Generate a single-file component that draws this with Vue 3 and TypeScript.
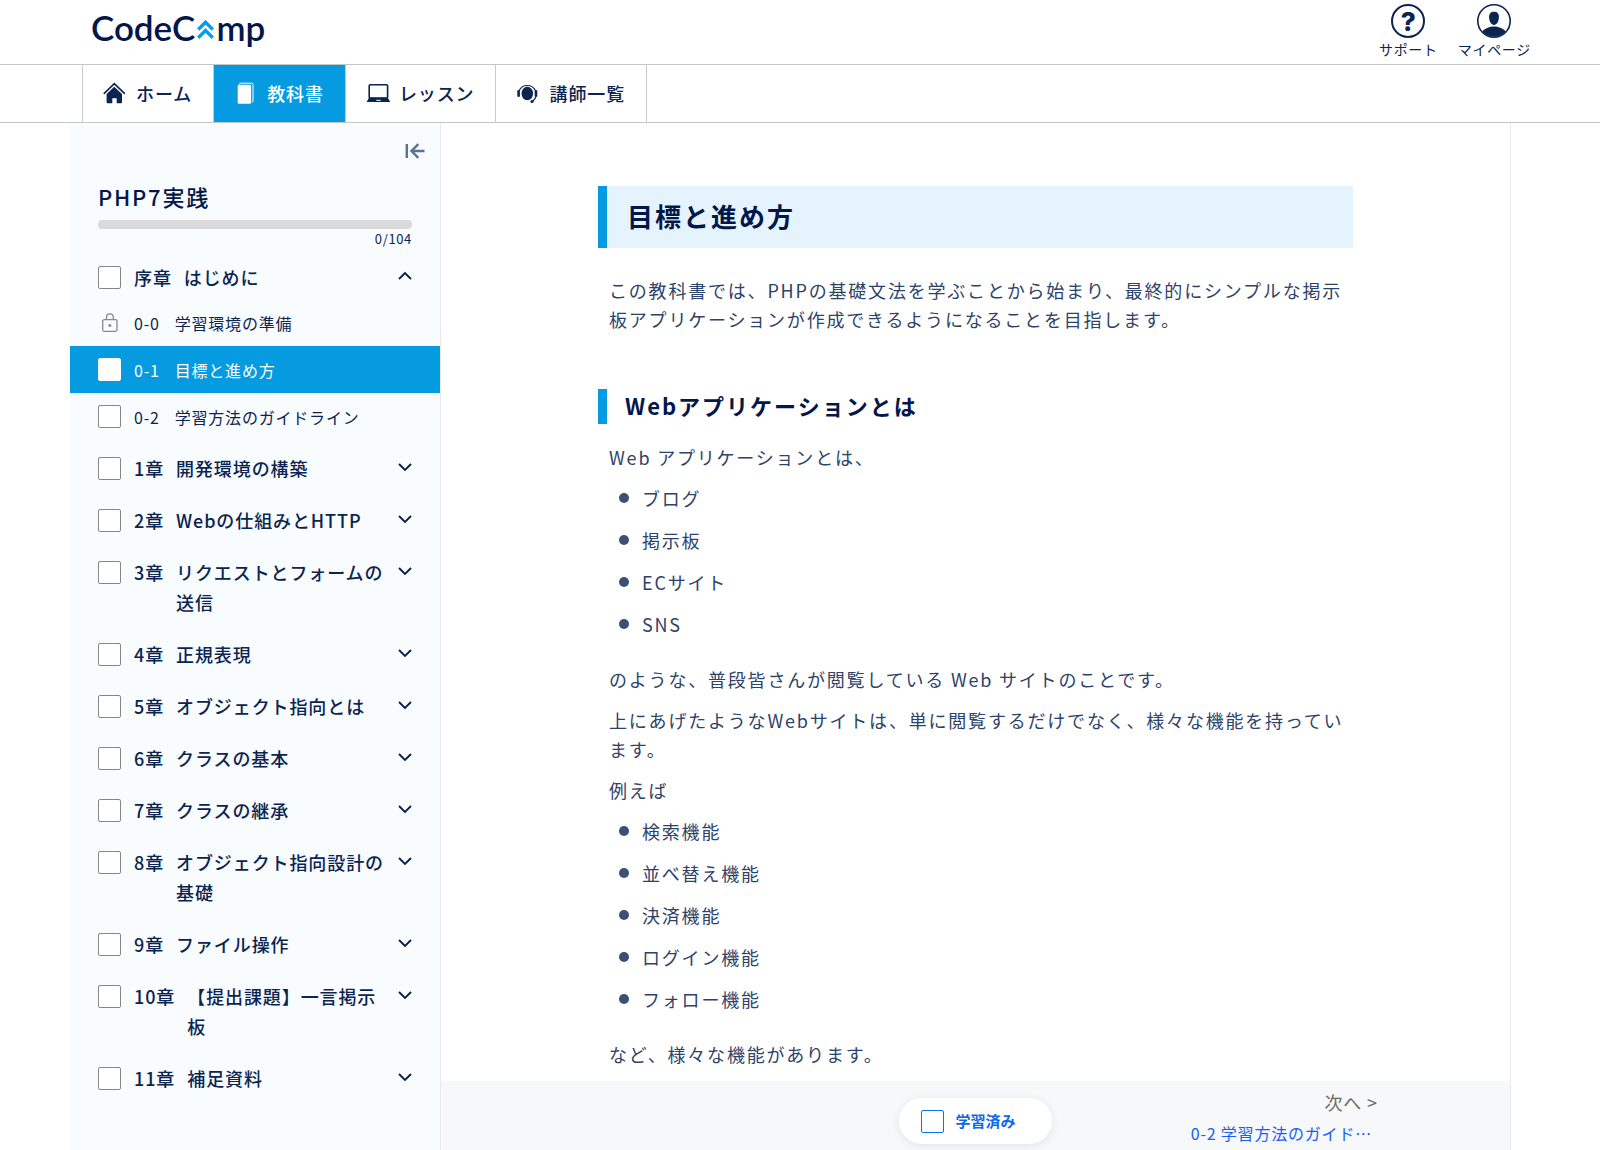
<script setup lang="ts">
import { ref } from 'vue'

interface Section {
  no: string
  title: string
  locked?: boolean
  current?: boolean
}

interface Chapter {
  no: string
  title: string
  sections?: Section[]
}

const chapters: Chapter[] = [
  {
    no: '序章',
    title: 'はじめに',
    sections: [
      { no: '0-0', title: '学習環境の準備', locked: true },
      { no: '0-1', title: '目標と進め方', current: true },
      { no: '0-2', title: '学習方法のガイドライン' },
    ],
  },
  { no: '1章', title: '開発環境の構築' },
  { no: '2章', title: 'Webの仕組みとHTTP' },
  { no: '3章', title: 'リクエストとフォームの送信' },
  { no: '4章', title: '正規表現' },
  { no: '5章', title: 'オブジェクト指向とは' },
  { no: '6章', title: 'クラスの基本' },
  { no: '7章', title: 'クラスの継承' },
  { no: '8章', title: 'オブジェクト指向設計の基礎' },
  { no: '9章', title: 'ファイル操作' },
  { no: '10章', title: '【提出課題】一言掲示板' },
  { no: '11章', title: '補足資料' },
]

const siteKinds: string[] = ['ブログ', '掲示板', 'ECサイト', 'SNS']
const features: string[] = ['検索機能', '並べ替え機能', '決済機能', 'ログイン機能', 'フォロー機能']

const openChapter = ref<string>('序章')
const done = ref<boolean>(false)

function toggle(no: string): void {
  openChapter.value = openChapter.value === no ? '' : no
}
</script>

<template>
  <div class="page">
    <header class="top">
      <a class="logo" href="#" aria-label="CodeCamp">
        <span>CodeC</span>
        <svg class="logo-mark" viewBox="0 0 17 20" width="17" height="20" aria-hidden="true">
          <path d="M1.200 10.500 8.500 3.200l7.300 7.300M1.200 18.800l7.300-7.300 7.300 7.300" fill="none" stroke="#00a0f5" stroke-width="3.400" />
        </svg>
        <span>mp</span>
      </a>
      <nav class="account">
        <a class="account-link" href="#">
          <span class="round">?</span>
          <span>サポート</span>
        </a>
        <a class="account-link" href="#">
          <svg viewBox="0 0 34 34" width="34" height="34" aria-hidden="true">
            <circle cx="17" cy="17" r="16.2" fill="#fff" stroke="#0c2450" stroke-width="1.6" />
            <path d="M17 7.800c3.400 0 4.900 2 4.900 5.200 0 4.200-2 8-4.900 8s-4.900-3.800-4.900-8c0-3.200 1.500-5.200 4.900-5.200z" fill="#0c2450" />
            <path d="M5.300 27.600C8 24.200 13 22.600 17 22.600s9 1.600 11.700 5A15.800 15.800 0 0 1 5.300 27.600z" fill="#0c2450" />
          </svg>
          <span>マイページ</span>
        </a>
      </nav>
    </header>

    <nav class="tabs">
      <a class="tab" href="#">
        <svg viewBox="0 0 24 24" width="24" height="24" aria-hidden="true">
          <path d="M1.200 12.300 11.300 2.600l10.100 9.700" fill="none" stroke="#0c2450" stroke-width="1.600" stroke-linecap="round" />
          <path d="M11.300 5.700 19 13v8.200a1 1 0 0 1-1 1h-4.300v-5h-4.400v5H4.600a1 1 0 0 1-1-1V13z" fill="#0c2450" />
        </svg>
        <span>ホーム</span>
      </a>
      <a class="tab active" href="#">
        <svg viewBox="0 0 24 24" width="24" height="24" aria-hidden="true">
          <path d="M5 3.400A1.700 1.700 0 0 1 6.500 2.200H17.800a1.200 1.200 0 0 1 1.200 1.200V20a1.200 1.200 0 0 1-1.200 1.200" fill="none" stroke="#fff" stroke-width="1" />
          <rect x="3.700" y="3.700" width="13.400" height="19" rx="1.200" fill="#fff" />
        </svg>
        <span>教科書</span>
      </a>
      <a class="tab" href="#">
        <svg viewBox="0 0 24 24" width="24" height="24" aria-hidden="true">
          <rect x="3.200" y="3.800" width="18.400" height="13.200" rx="1" fill="#fff" stroke="#0c2450" stroke-width="1.600" />
          <path d="M3 16.800h18.800l2 3.400a.5.500 0 0 1-.4.900H1.400a.5.500 0 0 1-.4-.9z" fill="#0c2450" />
          <path d="M10.300 19.300h4.400" stroke="#fff" stroke-width="1" />
        </svg>
        <span>レッスン</span>
      </a>
      <a class="tab" href="#">
        <svg viewBox="0 0 24 24" width="24" height="24" aria-hidden="true">
          <path d="M3 10a9 9 0 0 1 16.600 0" fill="none" stroke="#0c2450" stroke-width="1.200" />
          <ellipse cx="11.300" cy="12.500" rx="5.800" ry="6.700" fill="#0c2450" />
          <rect x="1.300" y="9" width="2.600" height="7" rx="1.300" fill="#0c2450" />
          <rect x="18.700" y="9" width="2.600" height="7" rx="1.300" fill="#0c2450" />
          <path d="M19.800 15.500c-.4 2.400-1.600 4-3.800 4.800" fill="none" stroke="#0c2450" stroke-width="1.200" />
          <circle cx="16" cy="20.500" r="1.600" fill="#0c2450" />
        </svg>
        <span>講師一覧</span>
      </a>
    </nav>

    <div class="body">
      <aside class="sidebar">
        <div class="collapse-row">
          <button class="icon-button" type="button" aria-label="目次を閉じる">
            <svg viewBox="0 0 20 16" width="20" height="16" aria-hidden="true">
              <path d="M1.800 1v14M19.500 8H7M13.300 1.200 6.500 8l6.800 6.800" fill="none" stroke="#5f6f8f" stroke-width="2.400" />
            </svg>
          </button>
        </div>
        <h2 class="course">PHP7実践</h2>
        <div class="bar"></div>
        <p class="count">0/104</p>

        <ul class="chapters">
          <li v-for="c in chapters" :key="c.no">
            <div class="chapter" :class="{ open: openChapter === c.no }">
              <input :id="'c-' + c.no" class="check" type="checkbox" />
              <label class="chapter-label" :for="'c-' + c.no">
                <span class="chapter-no">{{ c.no }}</span>
                <span>{{ c.title }}</span>
              </label>
              <button class="icon-button chevron" type="button" :aria-label="c.no + 'を開閉'" @click="toggle(c.no)">
                <svg viewBox="0 0 14 10" width="14" height="10" aria-hidden="true">
                  <path :d="openChapter === c.no ? 'M1 8l6-6 6 6' : 'M1 2l6 6 6-6'" fill="none" stroke="#0a1c48" stroke-width="1.800" />
                </svg>
              </button>
            </div>
            <ul v-if="c.sections && openChapter === c.no" class="sections">
              <li v-for="s in c.sections" :key="s.no" class="section" :class="{ current: s.current }">
                <span v-if="s.locked" class="lock">
                  <svg viewBox="0 0 16 19" width="16" height="19" aria-hidden="true">
                    <rect x=".7" y="6.700" width="14.300" height="11.600" rx="1.500" fill="none" stroke="#8a8a8a" stroke-width="1.300" />
                    <path d="M4.500 6.700V4.300a3.400 3.400 0 0 1 6.800 0v2.400" fill="none" stroke="#8a8a8a" stroke-width="1.300" />
                    <circle cx="7.900" cy="12.500" r="1.500" fill="#8a8a8a" />
                  </svg>
                </span>
                <input v-else class="check" type="checkbox" :aria-label="s.title" />
                <a class="section-link" href="#">
                  <span>{{ s.no }}</span>
                  <span>{{ s.title }}</span>
                </a>
              </li>
            </ul>
          </li>
        </ul>
      </aside>

      <main class="main">
        <article class="article">
          <h1>目標と進め方</h1>
          <p>この教科書では、PHPの基礎文法を学ぶことから始まり、最終的にシンプルな掲示板アプリケーションが作成できるようになることを目指します。</p>
          <h2>Webアプリケーションとは</h2>
          <p>Web アプリケーションとは、</p>
          <ul>
            <li v-for="k in siteKinds" :key="k">{{ k }}</li>
          </ul>
          <p>のような、普段皆さんが閲覧している Web サイトのことです。</p>
          <p>上にあげたようなWebサイトは、単に閲覧するだけでなく、様々な機能を持っています。</p>
          <p>例えば</p>
          <ul>
            <li v-for="f in features" :key="f">{{ f }}</li>
          </ul>
          <p>など、様々な機能があります。</p>
        </article>

        <footer class="footer">
          <label class="done">
            <input v-model="done" class="check blue" type="checkbox" />
            <span>学習済み</span>
          </label>
          <a class="next" href="#">
            <span class="next-head">次へ &gt;</span>
            <span class="next-title">0-2 学習方法のガイド…</span>
          </a>
        </footer>
      </main>
    </div>
  </div>
</template>

<style>
body {
  margin: 0;
  background: #fff;
}
</style>

<style scoped>
* {
  box-sizing: border-box;
}

.page {
  display: flex;
  flex-direction: column;
  min-height: 100vh;
  font-family: "Noto Sans CJK JP", "Noto Sans", sans-serif;
  color: #0c2450;
}

a {
  color: inherit;
  text-decoration: none;
}

ul,
h1,
h2,
p {
  margin: 0;
  padding: 0;
}

ul {
  list-style: none;
}

svg {
  display: block;
  flex: none;
}

.top {
  display: flex;
  justify-content: space-between;
  align-items: flex-start;
  height: 64px;
  padding: 4px 69px 0 91px;
}

.logo {
  display: flex;
  align-items: center;
  font-family: Lato, sans-serif;
  font-size: 35px;
  font-weight: 600;
  line-height: 46px;
  color: #04174a;
}

.logo-mark {
  margin: 3px 2px 0;
}

.account {
  display: flex;
  gap: 20px;
}

.account-link {
  display: flex;
  flex-direction: column;
  align-items: center;
  font-size: 14px;
  line-height: 22px;
  letter-spacing: 0.05em;
}

.round {
  width: 34px;
  height: 34px;
  border: 2px solid #0c2450;
  border-radius: 50%;
  font-family: Inter, sans-serif;
  font-size: 26px;
  font-weight: 800;
  line-height: 31px;
  letter-spacing: 0;
  text-align: center;
}

.tabs {
  display: flex;
  height: 59px;
  padding-left: 82px;
  border-top: 1px solid #c4c6c8;
  border-bottom: 1px solid #c4c6c8;
}

.tab {
  display: flex;
  align-items: center;
  gap: 9px;
  padding: 0 21px 2px 20px;
  border-right: 1px solid #c8cacc;
  font-size: 18px;
  font-weight: 500;
  letter-spacing: 0.05em;
}

.tab:first-child {
  border-left: 1px solid #c8cacc;
}

.tab.active {
  background: #069be1;
  color: #fff;
}

.body {
  display: flex;
  flex: 1;
  margin: 0 89px 0 70px;
  border-right: 1px solid #e8e9eb;
}

.sidebar {
  flex: none;
  width: 371px;
  border-right: 1px solid #e8e9eb;
  background: #f8fcff;
}

.collapse-row {
  display: flex;
  justify-content: flex-end;
  padding: 20px 15px 0 0;
}

.icon-button {
  padding: 0;
  border: 0;
  background: none;
  cursor: pointer;
}

.course {
  padding: 20px 28px 0;
  font-size: 22px;
  font-weight: 500;
  line-height: 34px;
  letter-spacing: 0.08em;
  color: #04174a;
}

.bar {
  height: 9px;
  margin: 7px 28px 0;
  border-radius: 4px;
  background: #dadada;
}

.count {
  padding: 0 28px;
  font-size: 13px;
  line-height: 20px;
  letter-spacing: 0.05em;
  text-align: right;
}

.chapters {
  padding-top: 2px;
}

.chapter {
  display: flex;
  align-items: flex-start;
  gap: 13px;
  padding: 11px 28px;
}

.chapter.open {
  padding-bottom: 7px;
}

.chapter-label {
  display: flex;
  flex: 1;
  gap: 12px;
  font-size: 18px;
  font-weight: 500;
  line-height: 30px;
  letter-spacing: 0.05em;
}

.chapter-no {
  white-space: nowrap;
}

.chevron {
  margin: 9px 0 0 -9px;
}

.check {
  flex: none;
  width: 23px;
  height: 23px;
  margin: 0;
  border: 1px solid #868686;
  border-radius: 2px;
  background: #fff;
  appearance: none;
}

.check:checked {
  background: #069be1;
}

.chapter .check {
  margin-top: 4px;
}

.sections {
  padding-bottom: 2px;
}

.section {
  display: flex;
  align-items: center;
  gap: 13px;
  height: 47px;
  padding: 0 28px;
}

.section.current {
  background: #069be1;
  color: #fff;
}

.section.current .check {
  border-color: #fff;
}

.lock {
  display: flex;
  justify-content: center;
  width: 23px;
}

.section-link {
  display: flex;
  gap: 15px;
  font-size: 16px;
  line-height: 24px;
  letter-spacing: 0.05em;
}

.main {
  display: flex;
  flex: 1;
  flex-direction: column;
  min-width: 0;
}

.article {
  width: 100%;
  max-width: 755px;
  margin: 0 auto;
  padding: 63px 0 12px;
  color: #2e4369;
}

.article h1 {
  padding: 10px 20px 12px;
  border-left: 9px solid #069be1;
  background: #e5f4fc;
  font-size: 26px;
  font-weight: 700;
  line-height: 40px;
  letter-spacing: 2px;
  color: #04174a;
}

.article h1 + p {
  margin-top: 28px;
}

.article h2 {
  margin: 55px 0 19px;
  padding: 0 0 2px 18px;
  border-left: 9px solid #069be1;
  font-size: 22px;
  font-weight: 700;
  line-height: 33px;
  letter-spacing: 2px;
  color: #04174a;
}

.article p {
  padding-left: 11px;
  font-size: 18px;
  line-height: 29px;
  letter-spacing: 0.1em;
}

.article p + p {
  margin-top: 12px;
}

.article ul {
  display: flex;
  flex-direction: column;
  gap: 12px;
  margin: 11px 0 26px;
  padding-left: 21px;
}

.article li {
  display: flex;
  align-items: center;
  gap: 13px;
  font-size: 18px;
  line-height: 30px;
  letter-spacing: 0.1em;
}

.article li::before {
  width: 10px;
  height: 10px;
  border-radius: 50%;
  background: #3b5074;
  content: "";
}

.footer {
  display: grid;
  grid-template-columns: 1fr auto 1fr;
  align-items: start;
  margin-top: auto;
  padding-top: 6px;
  background: #f6f8fa;
}

.done {
  display: flex;
  grid-column: 2;
  align-items: center;
  gap: 11px;
  height: 46px;
  margin: 11px 0 6px;
  padding: 0 36px 0 22px;
  border-radius: 23px;
  background: #fff;
  box-shadow: 0 2px 8px rgba(20, 80, 160, 0.1);
  font-size: 15px;
  font-weight: 700;
  line-height: 22px;
  color: #0a6ae6;
}

.check.blue {
  border-color: #0a74f0;
}

.next {
  display: flex;
  flex-direction: column;
  align-items: flex-end;
  padding-right: 132px;
  line-height: 31px;
}

.next-head {
  font-size: 18px;
  letter-spacing: 0.05em;
  color: #6b6b6b;
}

.next-title {
  padding-right: 6px;
  font-size: 16px;
  letter-spacing: 0.05em;
  color: #1760f5;
}
</style>
